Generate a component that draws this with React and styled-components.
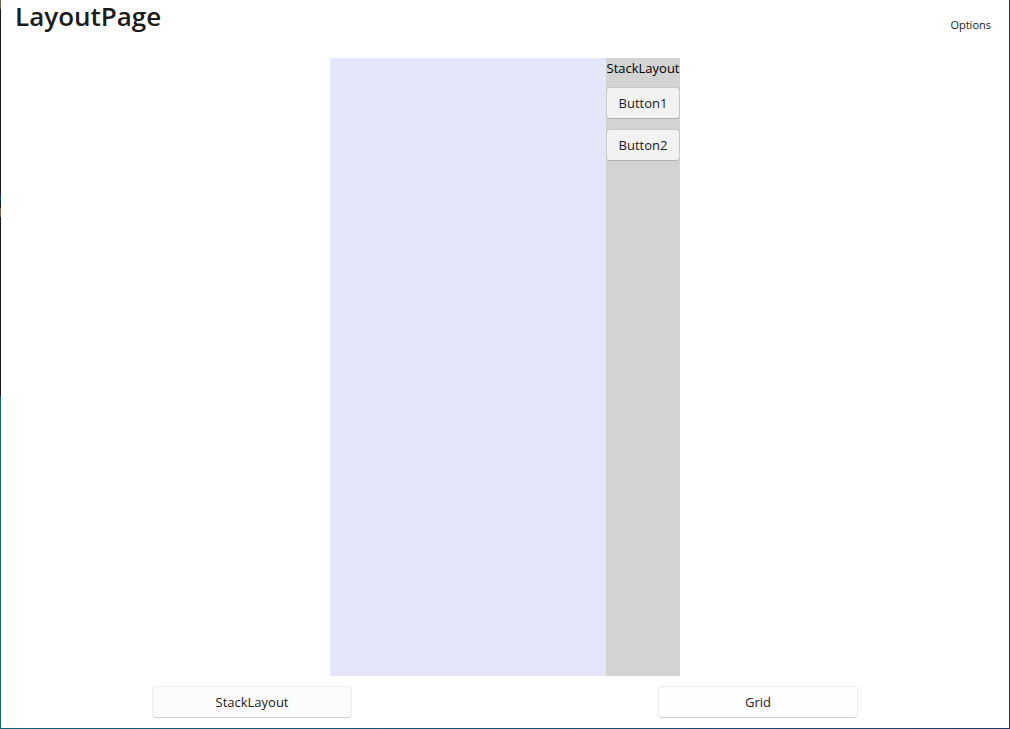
import React from "react";
import styled, { createGlobalStyle } from "styled-components";

const GlobalStyle = createGlobalStyle`
  *, *::before, *::after { box-sizing: border-box; }
  body {
    margin: 0;
    background: #ffffff;
    color: #1b1b1b;
    font-family: "Segoe UI", "Open Sans", "Noto Sans", sans-serif;
    font-size: 13px;
    line-height: 20px;
  }
`;

const WindowFrame = styled.div`
  display: flex;
  min-height: 100vh;
  padding: 0 1px 1px;
  background:
    linear-gradient(#6f5e49 0 9px, #17181b 9px 195px, #17486a 195px 201px, #17181b 201px 208px, #7b6547 208px 217px, #17181b 217px 396px, #17627b 396px) left / 1px 100% no-repeat,
    linear-gradient(#233a63, #233a63) right / 1px 100% no-repeat,
    linear-gradient(90deg, #0f6274, #1b4a70 75%, #233a63) bottom / 100% 1px no-repeat,
    #ffffff;
`;

const Page = styled.div`
  display: flex;
  flex: 1;
  flex-direction: column;
`;

const TitleBar = styled.header`
  display: flex;
  justify-content: space-between;
  align-items: flex-start;
  height: 48px;
  padding: 0 18px 0 14px;
`;

const Title = styled.h1`
  margin: 0;
  font-size: 26px;
  font-weight: 600;
  line-height: 32px;
`;

const ToolbarButton = styled.button`
  margin: 0;
  padding: 17px 0 14px;
  border: 0;
  background: transparent;
  color: inherit;
  font-family: inherit;
  font-size: 11px;
  line-height: 16px;
`;

const Content = styled.main`
  display: flex;
  flex: 1;
  justify-content: center;
  padding: 10px 0;
`;

const Preview = styled.section`
  display: flex;
  justify-content: flex-end;
  width: 350px;
  background: #e6e6fa;
`;

const Stack = styled.div`
  display: flex;
  flex-direction: column;
  gap: 10px;
  width: 74px;
  background: #d3d3d3;
`;

const StackLabel = styled.span`
  height: 19px;
  color: #000000;
  text-align: center;
  white-space: nowrap;
`;

const Button = styled.button`
  width: ${({ $width }) => $width || "100%"};
  height: 32px;
  margin: 0;
  padding: 0;
  border: 1px solid ${({ $solid }) => ($solid ? "#c8c8c8" : "#ececec")};
  border-bottom-color: ${({ $solid }) => ($solid ? "#b2b2b2" : "#cfcfcf")};
  border-radius: 4px;
  background: ${({ $fill }) => $fill || "#fefefe"};
  color: inherit;
  font-family: inherit;
  font-size: 13px;
  line-height: 20px;
`;

const Switcher = styled.nav`
  display: grid;
  grid-template-columns: 1fr 1fr;
  column-gap: 4px;
  justify-items: center;
  padding-bottom: 10px;
`;

export default function App() {
  return (
    <>
      <GlobalStyle />
      <WindowFrame>
        <Page>
          <TitleBar>
            <Title>LayoutPage</Title>
            <ToolbarButton type="button">Options</ToolbarButton>
          </TitleBar>
          <Content>
            <Preview>
              <Stack>
                <StackLabel>StackLayout</StackLabel>
                <Button type="button" $solid $fill="#f2f2f2">Button1</Button>
                <Button type="button" $solid $fill="#f2f2f2">Button2</Button>
              </Stack>
            </Preview>
          </Content>
          <Switcher aria-label="Layouts">
            <Button type="button" $width="200px" $fill="#fcfcfc">StackLayout</Button>
            <Button type="button" $width="200px">Grid</Button>
          </Switcher>
        </Page>
      </WindowFrame>
    </>
  );
}
